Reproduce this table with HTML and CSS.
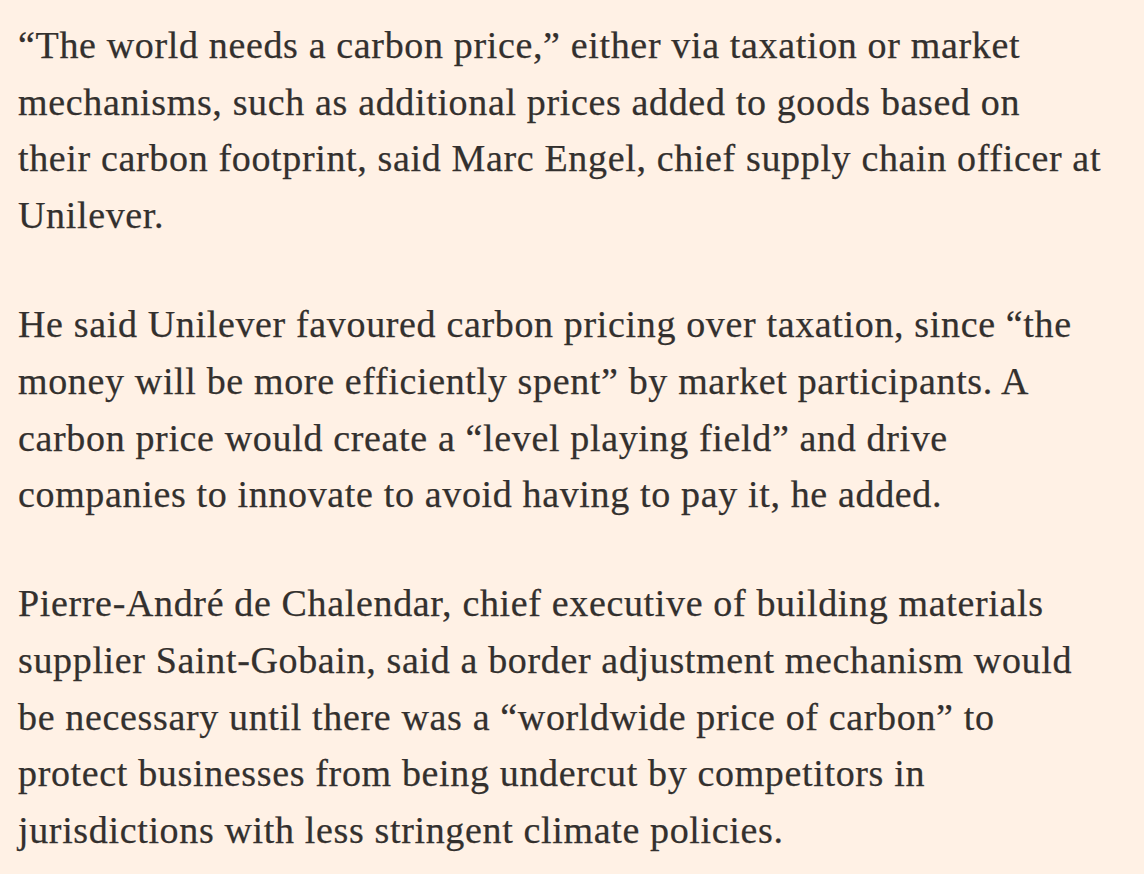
FILE: index.html
```html
<!DOCTYPE html>
<html lang="en">
<head>
<meta charset="utf-8">
<title>Article</title>
<link rel="stylesheet" href="styles.css">
</head>
<body>
<article class="article-body">
<p class="para"><span class="line">“The world needs a carbon price,” either via taxation or market</span><span class="line">mechanisms, such as additional prices added to goods based on</span><span class="line">their carbon footprint, said Marc Engel, chief supply chain officer at</span><span class="line">Unilever.</span></p>
<p class="para"><span class="line">He said Unilever favoured carbon pricing over taxation, since “the</span><span class="line">money will be more efficiently spent” by market participants. A</span><span class="line">carbon price would create a “level playing field” and drive</span><span class="line">companies to innovate to avoid having to pay it, he added.</span></p>
<p class="para"><span class="line">Pierre-André de Chalendar, chief executive of building materials</span><span class="line">supplier Saint-Gobain, said a border adjustment mechanism would</span><span class="line">be necessary until there was a “worldwide price of carbon” to</span><span class="line">protect businesses from being undercut by competitors in</span><span class="line">jurisdictions with less stringent climate policies.</span></p>
</article>
</body>
</html>
```
FILE: styles.css
```css
html, body {
  margin: 0;
  padding: 0;
  background: #FFF1E5;
}
body {
  width: 1144px;
  height: 874px;
  overflow: hidden;
}
.article-body {
  padding: 17px 0 0 18px;
  font-family: "Liberation Serif", "Times New Roman", serif;
  font-size: 38px;
  letter-spacing: 0.65px;
  line-height: 56.67px;
  color: #33302E;
  -webkit-text-stroke: 0.25px #33302E;
}
.para {
  margin: 0 0 52.5px 0;
}
.line {
  display: block;
  white-space: nowrap;
}
```
